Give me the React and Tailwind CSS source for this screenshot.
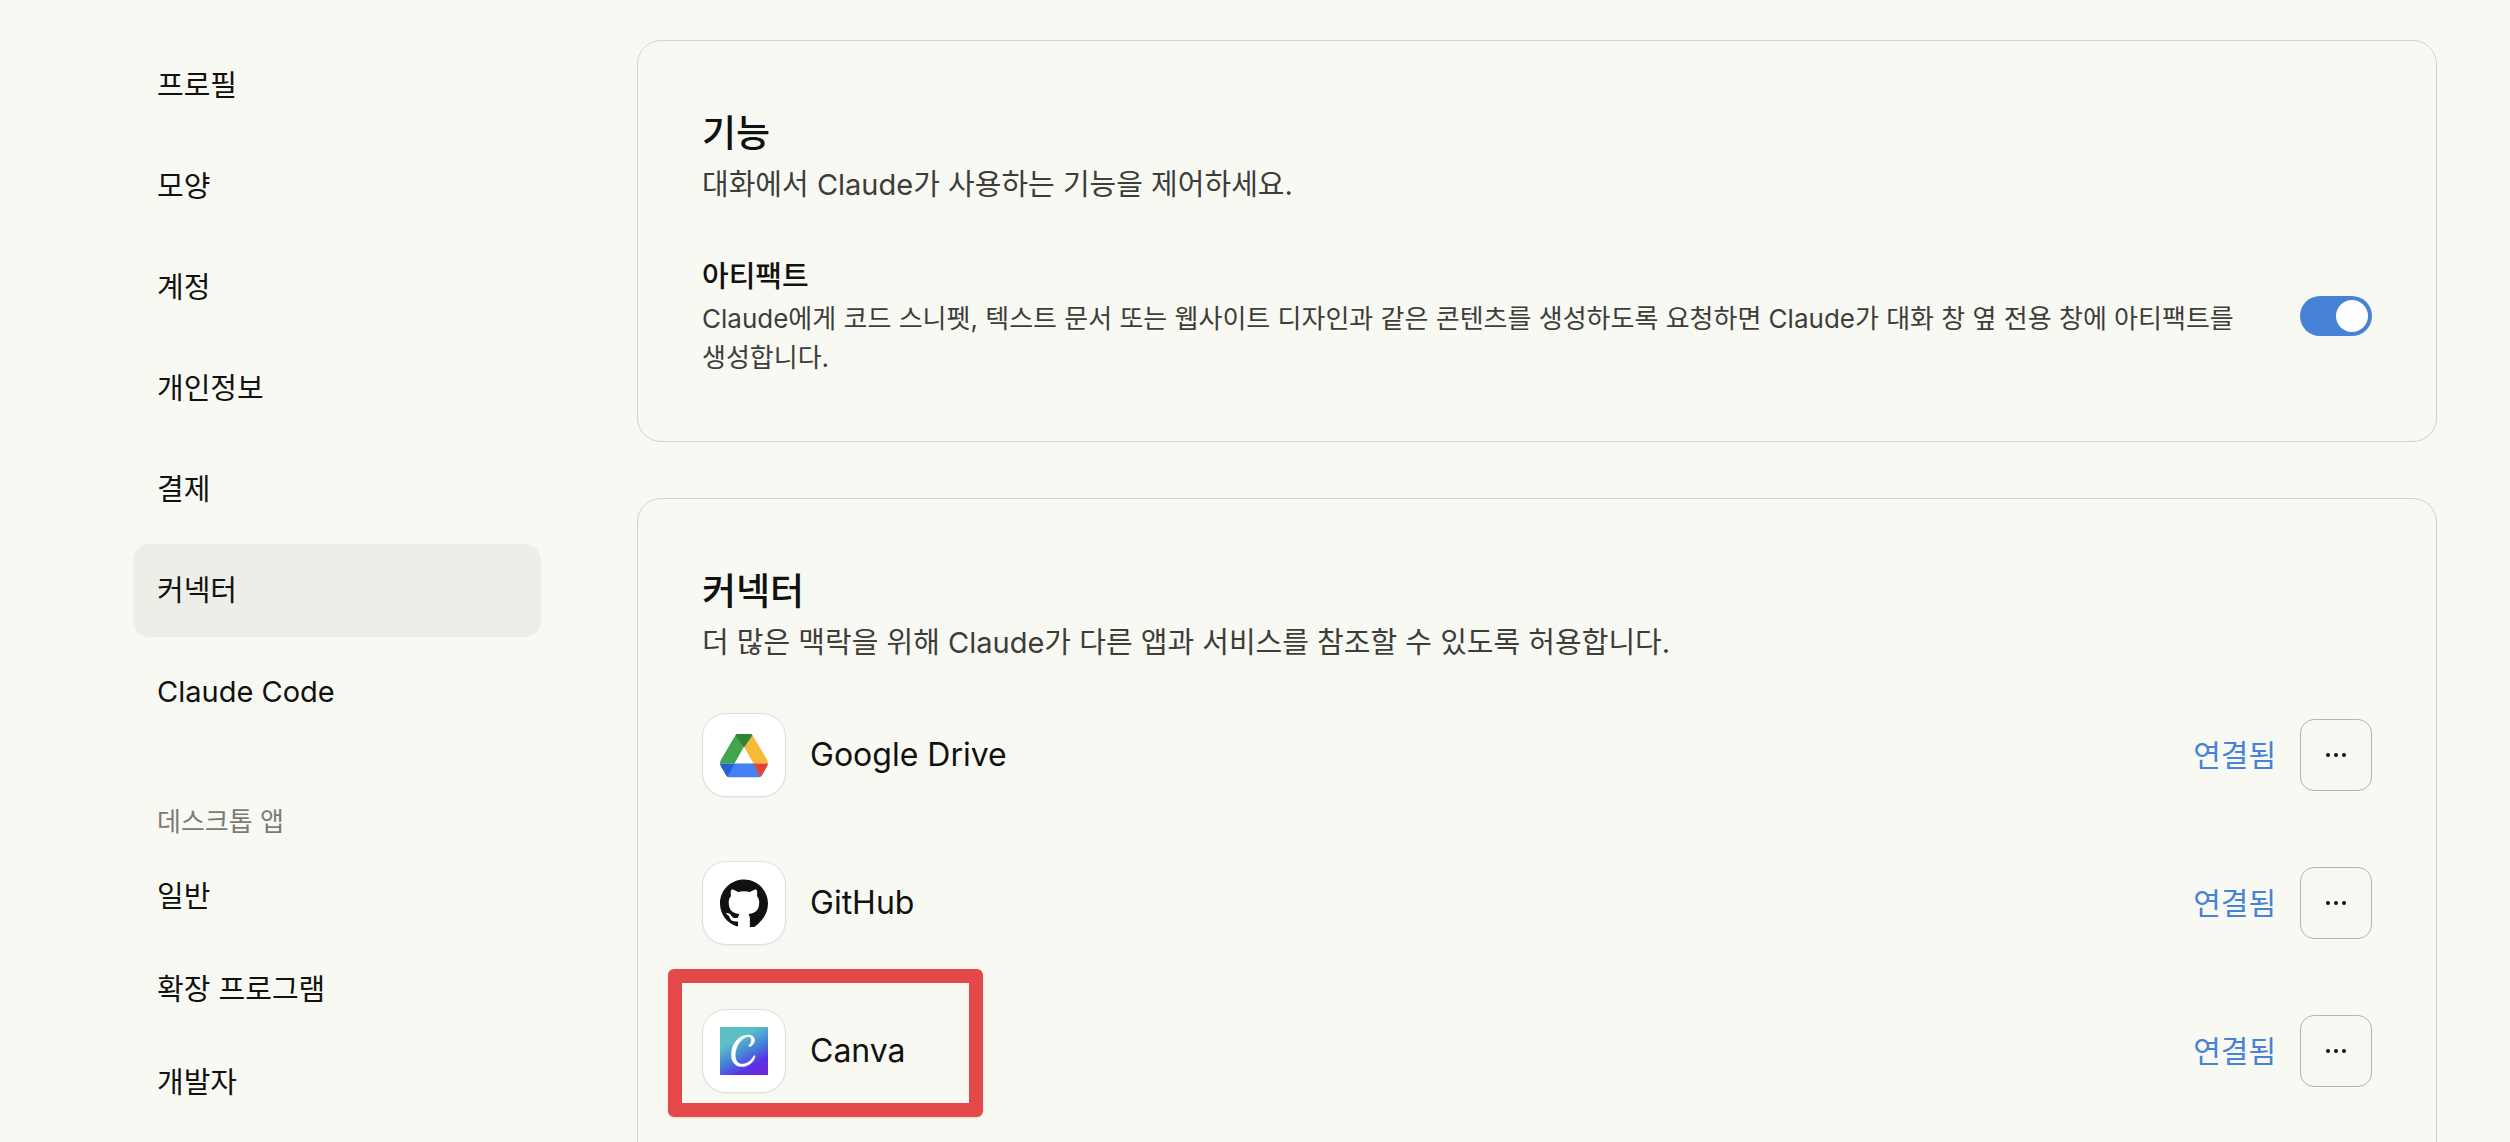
import React, { useState } from "react";

const accountMenu = [
  { id: "profile", label: "프로필" },
  { id: "appearance", label: "모양" },
  { id: "account", label: "계정" },
  { id: "privacy", label: "개인정보" },
  { id: "billing", label: "결제" },
  { id: "connectors", label: "커넥터" },
  { id: "claude-code", label: "Claude Code" },
];

const desktopMenu = [
  { id: "general", label: "일반" },
  { id: "extensions", label: "확장 프로그램" },
  { id: "developer", label: "개발자" },
];

const GoogleDriveIcon = () => (
  <svg viewBox="0 0 48 48" className="size-12" aria-hidden="true">
    <path d="M17.500 3Q16 3.300 15.200 4.700L1.100 28.500Q0 30.400 0 32.500H14.500L24 15.500Z" fill="#41a64b" />
    <path d="M30.500 3Q32 3.400 32.800 4.700L46.900 28.500Q48 30.400 48 32.500H33.500L24 15.500Z" fill="#f7ba38" />
    <path d="M15.500 4.300Q16.400 3 18 3H30Q31.600 3 32.500 4.300L24 16.500Z" fill="#328235" />
    <path d="M14 32.500H34L40.200 45.900Q39.500 46.300 38.500 46.300H9.500Q8.500 46.300 7.800 45.900Z" fill="#4280f3" />
    <path d="M0 32.500H14.500L8 46Q6.800 45.500 6.200 44.500L1.100 35.800Q0 34 0 32.500Z" fill="#2460cf" />
    <path d="M33.500 32.500H48Q48 34 46.900 35.800L41.800 44.500Q41.200 45.500 40 46Z" fill="#de4535" />
  </svg>
);

const GitHubIcon = () => (
  <svg viewBox="0 0 24 24" className="size-12" fill="#11120f" aria-hidden="true">
    <path d="M12 .297c-6.63 0-12 5.373-12 12 0 5.303 3.438 9.800 8.205 11.385.6.113.82-.258.82-.577 0-.285-.01-1.040-.015-2.040-3.338.724-4.042-1.610-4.042-1.610C4.422 18.070 3.633 17.700 3.633 17.700c-1.087-.744.084-.729.084-.729 1.205.084 1.838 1.236 1.838 1.236 1.070 1.835 2.809 1.305 3.495.998.108-.776.417-1.305.760-1.605-2.665-.300-5.466-1.332-5.466-5.930 0-1.310.465-2.380 1.235-3.220-.135-.303-.540-1.523.105-3.176 0 0 1.005-.322 3.300 1.230.960-.267 1.980-.399 3-.405 1.020.006 2.040.138 3 .405 2.280-1.552 3.285-1.230 3.285-1.230.645 1.653.240 2.873.120 3.176.765.840 1.230 1.910 1.230 3.220 0 4.610-2.805 5.625-5.475 5.920.420.360.810 1.096.810 2.220v4.500c0 .315.210.690.825.570C20.565 22.092 24 17.592 24 12.297c0-6.627-5.373-12-12-12" />
  </svg>
);

const CanvaIcon = () => (
  <svg viewBox="0 0 48 48" className="size-12" aria-hidden="true">
    <defs>
      <linearGradient id="canva-bg" x1="0.2" y1="0" x2="0.75" y2="1">
        <stop offset="0.25" stopColor="#5bbfc6" />
        <stop offset="0.55" stopColor="#4483d6" />
        <stop offset="0.82" stopColor="#5733e6" />
        <stop offset="1" stopColor="#6b2bd9" />
      </linearGradient>
    </defs>
    <rect width="48" height="48" fill="url(#canva-bg)" />
    <path
      d="M29.500 19.500C28.500 19.500 28.500 18.500 29.500 17.800C31.500 16 32.500 11 29.500 9.800C24 8.500 15.500 17 15.200 27.500C15 35 19 37.500 22.800 37C27.500 36.500 31 34 33.800 29C34.300 28.200 35.200 28.700 34.900 30C33.500 35.500 28 39.600 21.800 39.600C15 39.600 11.200 34.500 11.400 27C11.700 16.500 19 8 28 8C32 8 34.500 10 34.500 13C34.500 16.500 31.500 19.500 29.500 19.500Z"
      fill="#fff"
      stroke="#fff"
      strokeWidth="0.5"
    />
  </svg>
);

const connectors = [
  { id: "drive", name: "Google Drive", Icon: GoogleDriveIcon },
  { id: "github", name: "GitHub", Icon: GitHubIcon },
  { id: "canva", name: "Canva", Icon: CanvaIcon, highlighted: true },
];

const MenuItem = ({ item, active, onSelect }) => (
  <button
    type="button"
    onClick={() => onSelect(item.id)}
    aria-current={active ? "page" : undefined}
    className={`flex h-[93px] w-full items-center rounded-2xl px-6 text-left text-[29px] ${
      active ? "bg-[#eeeee8]" : ""
    }`}
  >
    {item.label}
  </button>
);

const Card = ({ title, description, children }) => (
  <section className="rounded-3xl border border-[#d3d3cc] p-16">
    <h2 className="text-[37px] leading-[58px] font-medium">{title}</h2>
    <p className="text-[29px] leading-11 text-[#3d3d3a]">{description}</p>
    {children}
  </section>
);

const ConnectorRow = ({ connector }) => {
  const { name, Icon, highlighted } = connector;
  return (
    <li className="relative flex items-center gap-6">
      <span className="flex size-[84px] items-center justify-center rounded-3xl border border-[#dededa] bg-white shadow-xs">
        <Icon />
      </span>
      <span className="flex-1 text-[32px]">{name}</span>
      <span className="text-[30px] text-[#4682d5]">연결됨</span>
      <button
        type="button"
        aria-label={`${name} 메뉴`}
        className="flex size-18 items-center justify-center rounded-[14px] border border-[#b5b5af]"
      >
        <svg viewBox="0 0 24 24" className="size-6" fill="#11120f" aria-hidden="true">
          <circle cx="4" cy="12" r="2" />
          <circle cx="12" cy="12" r="2" />
          <circle cx="20" cy="12" r="2" />
        </svg>
      </button>
      {highlighted && (
        <span className="pointer-events-none absolute -top-10 -left-[34px] h-[148px] w-[315px] rounded-md border-[14px] border-[#e54848] shadow-sm" />
      )}
    </li>
  );
};

const App = () => {
  const [current, setCurrent] = useState("connectors");
  const [artifacts, setArtifacts] = useState(true);

  return (
    <div
      lang="ko"
      className="flex h-screen gap-24 overflow-hidden bg-[#f9f9f4] pr-[73px] pl-[133px] font-[Inter,'Noto_Sans_CJK_KR',sans-serif] text-[#11120f]"
    >
      <nav className="w-[408px] shrink-0 pt-[39px]">
        <div className="flex flex-col gap-2">
          {accountMenu.map((item) => (
            <MenuItem key={item.id} item={item} active={item.id === current} onSelect={setCurrent} />
          ))}
        </div>
        <h3 className="mt-16 mb-2 px-6 text-[26px] leading-10 text-[#7b7b75]">데스크톱 앱</h3>
        {desktopMenu.map((item) => (
          <MenuItem key={item.id} item={item} active={item.id === current} onSelect={setCurrent} />
        ))}
      </nav>

      <main className="flex min-w-0 flex-1 flex-col gap-14 pt-10">
        <Card title="기능" description="대화에서 Claude가 사용하는 기능을 제어하세요.">
          <div className="mt-12 flex items-center gap-16">
            <div className="flex-1">
              <label htmlFor="artifacts" className="block text-[29px] leading-11 font-medium">
                아티팩트
              </label>
              <p id="artifacts-desc" className="text-[26px] leading-[39px] break-keep text-[#3d3d3a]">
                Claude에게 코드 스니펫, 텍스트 문서 또는 웹사이트 디자인과 같은 콘텐츠를 생성하도록 요청하면 Claude가 대화 창 옆 전용 창에 아티팩트를 생성합니다.
              </p>
            </div>
            <input
              id="artifacts"
              type="checkbox"
              role="switch"
              aria-describedby="artifacts-desc"
              checked={artifacts}
              onChange={(e) => setArtifacts(e.target.checked)}
              className="flex h-10 w-18 shrink-0 appearance-none items-center rounded-full bg-[#b5b5af] px-1 before:size-8 before:rounded-full before:bg-white checked:justify-end checked:bg-[#4682d5]"
            />
          </div>
        </Card>

        <Card title="커넥터" description="더 많은 맥락을 위해 Claude가 다른 앱과 서비스를 참조할 수 있도록 허용합니다.">
          <ul className="mt-12 flex flex-col gap-16 pb-16">
            {connectors.map((connector) => (
              <ConnectorRow key={connector.id} connector={connector} />
            ))}
          </ul>
        </Card>
      </main>
    </div>
  );
};

export default App;
